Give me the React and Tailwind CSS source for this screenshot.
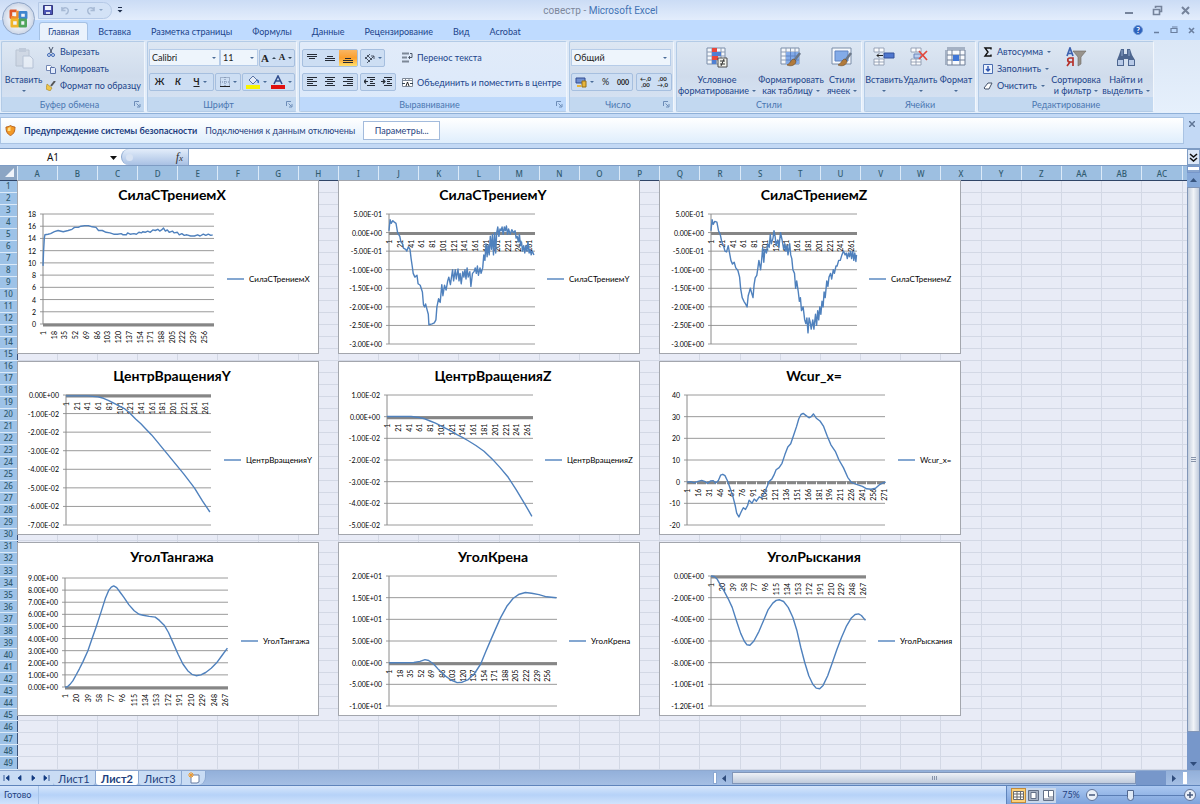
import { useState } from 'react';

const columns = [
  'A', 'B', 'C', 'D', 'E', 'F', 'G', 'H', 'I', 'J', 'K', 'L', 'M', 'N', 'O', 'P',
  'Q', 'R', 'S', 'T', 'U', 'V', 'W', 'X', 'Y', 'Z', 'AA', 'AB', 'AC',
];
const rows = Array.from({ length: 49 }, (_, i) => i + 1);

const sci = (v) => {
  if (v === 0) return '0.00E+00';
  const [m, e] = v.toExponential(2).split('e');
  return `${m}E${e[0]}${e.slice(1).padStart(2, '0')}`;
};

// plot: [left, right, top, bottom] inside the chart frame
// points: flat list of index, value pairs
const charts = [
  {
    title: 'СилаСТрениемX', plot: [25, 196, 33, 143], max: 18, min: 0, step: 2, every: 17, last: 256, legendX: 209,
    plain: true,
    points: [0, 9.5, 1, 12, 2, 14, 3, 14.6, 8, 14.7, 12, 14.8, 18, 15.1, 24, 15.3, 32, 15.1, 40, 15.3, 46, 15.5, 50, 15.8, 56, 15.8, 60, 16, 66, 16.1, 72, 16.1, 78, 15.9, 84, 15.8, 88, 15.3, 94, 15.3, 100, 15, 106, 14.9, 112, 14.7, 118, 14.7, 124, 14.8, 127, 14.6, 132, 14.6, 134, 14.9, 138, 14.7, 144, 14.8, 148, 14.7, 152, 15, 156, 14.9, 158, 15.1, 162, 15, 166, 15.2, 170, 15, 174, 15.4, 178, 15.3, 182, 15.5, 185, 15.2, 188, 15.4, 191, 15.7, 194, 15.2, 197, 15.4, 200, 15, 205, 15.2, 208, 14.9, 213, 15, 216, 14.6, 220, 14.8, 224, 14.5, 228, 14.6, 234, 14.4, 240, 14.4, 245, 14.6, 249, 14.4, 254, 14.7, 258, 14.5, 262, 14.7, 266, 14.5, 269, 14.6],
  },
  {
    title: 'СилаСТрениемY', plot: [50, 196, 33, 163], max: 0.5, min: -3, step: 0.5, every: 20, last: 261, legendX: 208,
    points: [0, 0.05, 2, 0.35, 4, 0.25, 7, 0.32, 10, 0.28, 13, 0.25, 16, 0, 20, -0.1, 22, -0.25, 25, -0.3, 27, -0.42, 31, -0.45, 33, -0.5, 36, -0.38, 39, -0.45, 41, -0.7, 43, -0.9, 45, -1.1, 48, -1.2, 52, -1.15, 54, -1.38, 58, -1.42, 62, -1.6, 64, -1.95, 66, -2, 68, -1.92, 71, -2.1, 73, -2.2, 74, -2.48, 80, -2.46, 84, -2.43, 87, -2.35, 89, -2, 92, -1.78, 95, -1.88, 98, -1.4, 100, -1.7, 103, -1.42, 106, -1.55, 109, -1.3, 111, -1.2, 114, -1.4, 118, -1, 120, -1.3, 123, -1, 125, -1.25, 128, -0.98, 130, -1.3, 132, -1.1, 134, -1.38, 137, -1.05, 139, -1.2, 141, -1, 143, -1.25, 145, -0.95, 147, -1.2, 150, -1.05, 152, -1.45, 155, -1.1, 158, -1.05, 160, -0.95, 162, -1.1, 164, -0.9, 166, -1.15, 169, -0.95, 171, -1.1, 174, -0.95, 176, -0.6, 178, -0.75, 180, -0.3, 182, -0.65, 184, -0.35, 186, -0.6, 188, -0.1, 190, -0.45, 192, -0.05, 194, -0.6, 196, 0, 198, -0.55, 200, 0, 202, 0.15, 204, -0.1, 206, 0.1, 208, 0.05, 210, 0.15, 212, -0.05, 214, 0.15, 216, 0.05, 218, 0.18, 220, -0.05, 222, 0.1, 225, -0.05, 228, 0.08, 231, 0, 234, 0.05, 236, -0.15, 238, -0.1, 240, -0.25, 242, -0.05, 244, -0.35, 246, -0.25, 248, -0.5, 250, -0.35, 252, -0.55, 254, -0.35, 256, -0.5, 258, -0.25, 260, -0.55, 262, -0.45, 264, -0.6, 266, -0.5, 269, -0.6],
  },
  {
    title: 'СилаСТрениемZ', plot: [51, 197, 33, 163], max: 0.5, min: -3, step: 0.5, every: 20, last: 261, legendX: 209,
    points: [0, 0.05, 2, 0.35, 4, 0.22, 7, 0.3, 11, 0.28, 14, 0.05, 17, -0.05, 20, -0.25, 23, -0.35, 26, -0.5, 29, -0.52, 32, -0.35, 35, -0.6, 37, -0.75, 40, -0.85, 43, -0.8, 46, -0.95, 50, -1.02, 53, -1.2, 55, -1.5, 58, -1.75, 61, -1.85, 64, -1.92, 67, -2, 69, -1.7, 71, -1.6, 73, -1.5, 76, -1.65, 78, -1.75, 80, -1.4, 82, -1.22, 85, -1.15, 87, -0.95, 89, -0.75, 92, -1, 94, -0.75, 96, -0.4, 98, -0.8, 100, -0.45, 103, -0.55, 105, -0.3, 108, -0.4, 110, -0.05, 112, -0.3, 115, -0.15, 117, 0.05, 119, -0.1, 121, -0.35, 124, -0.2, 126, -0.4, 129, 0, 132, -0.2, 135, -0.45, 137, -0.3, 139, -0.5, 141, -0.35, 143, -0.6, 146, -0.3, 148, -0.6, 150, -0.7, 152, -1, 155, -1.1, 157, -1.5, 159, -1.3, 162, -1.6, 164, -1.85, 166, -1.75, 168, -2.1, 171, -2, 174, -2.35, 176, -2.45, 178, -2.3, 180, -2.7, 182, -2.3, 184, -2.4, 186, -2.6, 189, -2.35, 191, -2.6, 194, -2.2, 196, -2.5, 198, -2.1, 200, -2.35, 202, -2, 204, -2.2, 206, -1.85, 208, -2, 210, -1.6, 212, -1.75, 215, -1.3, 217, -1.45, 219, -1.2, 222, -1.1, 224, -1.25, 227, -1, 229, -1.1, 232, -0.9, 234, -0.9, 237, -0.75, 240, -0.75, 243, -0.6, 246, -0.5, 249, -0.6, 251, -0.55, 253, -0.7, 255, -0.55, 257, -0.65, 259, -0.5, 261, -0.7, 263, -0.5, 265, -0.75, 267, -0.55, 269, -0.78, 270, -0.6],
  },
  {
    title: 'ЦентрВращенияY', plot: [48, 193, 33, 163], max: 0, min: -0.07, step: 0.01, every: 20, last: 261, legendX: 206,
    points: [0, -0.0005, 40, -0.0005, 60, -0.001, 70, -0.0018, 80, -0.003, 90, -0.0045, 100, -0.006, 110, -0.0075, 120, -0.01, 130, -0.013, 140, -0.0155, 150, -0.0185, 160, -0.0215, 170, -0.025, 180, -0.0285, 190, -0.032, 200, -0.0355, 220, -0.0425, 240, -0.05, 255, -0.057, 269, -0.063],
  },
  {
    title: 'ЦентрВращенияZ', plot: [48, 194, 33, 163], max: 0.01, min: -0.05, step: 0.01, every: 20, last: 261, legendX: 206,
    points: [0, 0.0001, 45, 0.0001, 60, -0.0004, 70, -0.001, 80, -0.002, 90, -0.003, 100, -0.0042, 110, -0.0055, 120, -0.0068, 130, -0.0083, 140, -0.0095, 150, -0.011, 165, -0.0133, 180, -0.016, 195, -0.0195, 210, -0.0235, 225, -0.028, 240, -0.0338, 255, -0.04, 269, -0.046],
  },
  {
    title: 'Wcur_x=', plot: [27, 225, 33, 163], max: 40, min: -20, step: 10, every: 15, last: 271, legendX: 238,
    plain: true, dashed: true,
    points: [0, -0.2, 5, 0, 10, -0.5, 14, 0, 20, 0.6, 25, 0, 28, -0.8, 32, 0.3, 36, 0.5, 39, -0.6, 43, 0.5, 46, 3, 49, 3.4, 52, 2.8, 56, 0, 60, -4, 63, -7, 66, -11, 68, -14.5, 71, -16.3, 74, -14, 77, -12, 80, -12.8, 83, -11, 85, -8.5, 89, -10, 92, -8, 95, -9, 99, -7, 102, -7.5, 106, -5, 110, -2, 112, 0, 116, 1.2, 119, 3, 122, 5.5, 126, 6.5, 130, 8.5, 134, 12.5, 138, 16, 142, 17.5, 146, 21.5, 150, 25.5, 153, 29, 156, 31, 159, 31.5, 163, 30.5, 167, 29.5, 170, 30, 173, 31.3, 177, 29.3, 182, 28, 187, 25.5, 192, 21, 197, 17, 203, 14, 208, 10, 214, 6.5, 220, 2, 225, -0.3, 232, -1.2, 240, -2.2, 246, -3.3, 252, -3.5, 258, -3, 263, -1.5, 268, -0.6, 272, -0.2],
  },
  {
    title: 'УголТангажа', plot: [47, 210, 35, 144], max: 9, min: 0, step: 1, every: 19, last: 267, legendX: 223,
    points: [0, 0, 4, 0.02, 8, 0.2, 13, 0.5, 18, 0.95, 24, 1.5, 30, 2.1, 38, 3, 45, 4, 52, 5, 60, 6.2, 67, 7.3, 73, 8, 77, 8.25, 81, 8.35, 86, 8.2, 92, 7.8, 98, 7.4, 106, 6.8, 115, 6.3, 123, 6, 130, 5.93, 140, 5.83, 150, 5.77, 157, 5.5, 165, 5.1, 172, 4.5, 180, 3.6, 188, 2.7, 196, 1.9, 204, 1.35, 211, 1.05, 218, 0.93, 226, 1, 234, 1.2, 243, 1.55, 252, 2, 261, 2.6, 270, 3.2],
  },
  {
    title: 'УголКрена', plot: [50, 218, 33, 163], max: 20, min: -10, step: 5, every: 17, last: 256, legendX: 230,
    points: [0, 0, 40, 0.05, 50, 0.3, 58, 0.7, 64, 0.5, 72, -0.3, 80, -1.6, 90, -3, 100, -4, 110, -4.6, 118, -4.5, 128, -3.9, 138, -2.5, 148, -0.3, 156, 2.5, 164, 5.2, 172, 7.8, 180, 10.4, 190, 13, 200, 14.8, 210, 15.8, 220, 16.2, 230, 16, 242, 15.7, 254, 15.2, 270, 15],
  },
  {
    title: 'УголРыскания', plot: [51, 206, 33, 163], max: 0, min: -12, step: 2, every: 19, last: 267, legendX: 218,
    points: [0, 0, 6, -0.05, 11, -0.3, 16, -0.8, 22, -1.3, 30, -2.1, 37, -2.9, 45, -4.2, 52, -5.3, 58, -6, 63, -6.35, 68, -6.4, 75, -6, 84, -5.1, 92, -4.1, 100, -3.1, 108, -2.5, 114, -2.25, 120, -2.2, 127, -2.35, 135, -2.9, 143, -3.8, 150, -5, 157, -6.6, 164, -8, 171, -9.2, 178, -10, 184, -10.35, 190, -10.4, 196, -10.1, 204, -9.2, 212, -8, 220, -6.8, 228, -5.7, 237, -4.6, 245, -3.9, 252, -3.55, 258, -3.5, 263, -3.65, 270, -4.1],
  },
];

const Chart = ({ chart }) => {
  const { title, plot, max, min, step, every, last, legendX, plain, dashed, points } = chart;
  const [x0, x1, y0, y1] = plot;
  const xAt = (i) => x0 + (i * (x1 - x0)) / 271;
  const yAt = (v) => y0 + ((max - v) * (y1 - y0)) / (max - min);
  const lines = Array.from({ length: Math.round((max - min) / step) + 1 }, (_, i) => {
    const v = max - i * step;
    return Math.abs(v) < step / 100 ? 0 : v;
  });
  const ticks = [];
  for (let i = 1; i <= last; i += every) ticks.push(i);
  const path = [];
  for (let i = 0; i < points.length; i += 2) {
    path.push(`${xAt(points[i]).toFixed(1)},${yAt(points[i + 1]).toFixed(1)}`);
  }

  return (
    <svg
      role="img"
      aria-label={title}
      viewBox="0 0 300 172"
      className="block h-[174px] w-[302px] border border-[#a3a6ad] bg-white font-['Lato','Noto_Sans',sans-serif]"
    >
      <text x="154" y="19" textAnchor="middle" className="text-[14px] font-bold">{title}</text>
      {lines.map((v) => (
        <g key={v}>
          <line x1={x0 - 3} x2={x1} y1={yAt(v)} y2={yAt(v)} stroke="#9a9a9a" />
          <text x={x0 - 7} y={yAt(v) + 3} textAnchor="end" className="text-[7px]">{plain ? v : sci(v)}</text>
        </g>
      ))}
      <line x1={x0} x2={x0} y1={y0} y2={y1} stroke="#8a8a8a" />
      <line
        x1={x0} x2={x1} y1={yAt(0) + 1} y2={yAt(0) + 1}
        stroke="#868686" strokeWidth="3" strokeDasharray={dashed ? '9 1' : undefined}
      />
      {ticks.map((t) => (
        <text
          key={t}
          transform={`translate(${xAt(t - 1) + 3} ${yAt(0) + 7}) rotate(-90)`}
          textAnchor="end"
          className="text-[7px]"
        >
          {t}
        </text>
      ))}
      <polyline points={path.join(' ')} fill="none" stroke="#4f81bd" strokeWidth="1.4" strokeLinejoin="round" />
      <line x1={legendX} x2={legendX + 17} y1="98" y2="98" stroke="#4f81bd" strokeWidth="1.4" />
      <text x={legendX + 22} y="101" className="text-[8px]">{title}</text>
    </svg>
  );
};

const Caret = () => (
  <svg viewBox="0 0 4 2" className="h-[2px] w-[4px] shrink-0"><path d="M0 0h4L2 2z" fill="#4a6c98" /></svg>
);

const Svg = ({ size = 'size-[14px]', box = 14, children }) => (
  <svg viewBox={`0 0 ${box} ${box}`} className={`${size} shrink-0`} fill="none">{children}</svg>
);

const Group = ({ title, width, launcher, hot, children }) => (
  <section className={`flex shrink-0 flex-col overflow-hidden rounded-[2px] border border-[#b3cbe6] border-r-[#f1f6fc] ${width} ${hot ? 'bg-linear-to-b from-[#e1ebf9] to-[#dbe9fb]' : 'bg-linear-to-b from-[#dde7f3] via-[#d0dcec] to-[#d7e4f5]'}`}>
    <div className="flex h-[56px] items-stretch">{children}</div>
    <div className={`flex h-[14px] items-center px-[3px] text-[9px] leading-none text-[#4a76b0] ${hot ? 'bg-[#bed9fb]' : 'bg-[#c2d8f0]'}`}>
      <span className="flex-1 text-center">{title}</span>
      {launcher && (
        <button aria-label={`${title}: параметры`}>
          <Svg size="size-[7px]" box={7}><path d="M.5 5V.5H5M2.500 2.500l3 3M6 3v3H3" stroke="#6d8db8" /></Svg>
        </button>
      )}
    </div>
  </section>
);

const Box = ({ children, label }) => (
  <div role="group" aria-label={label} className="flex h-[18px] items-stretch rounded-[2px] border border-[#a6bfdf] bg-[#cddef3]">{children}</div>
);

const Tool = ({ label, width = 'w-[18px]', active, children }) => (
  <button
    aria-label={label}
    className={`flex items-center justify-center gap-[3px] text-[9px] font-bold text-[#222] ${width} ${active ? 'bg-linear-to-b from-[#f9b661] via-[#fb9f2c] to-[#ffdf6b]' : ''}`}
  >
    {children}
  </button>
);

const Big = ({ icon, lines, width, disabled }) => (
  <button className={`flex flex-col items-center pt-[5px] leading-[11px] whitespace-nowrap ${width}`}>
    <span className={`mb-[5px] block h-[22px] ${disabled ? 'opacity-40' : ''}`}>{icon}</span>
    <span>{lines[0]}</span>
    <span className="flex h-[11px] items-center gap-[3px]">{lines[1]}<Caret /></span>
  </button>
);

const Small = ({ icon, text, caret }) => (
  <button className="flex h-[17px] items-center gap-[4px] whitespace-nowrap">
    {icon}
    <span>{text}</span>
    {caret && <Caret />}
  </button>
);

const Drop = ({ label, value, width }) => (
  <span className={`relative flex h-[17px] items-center ${width}`}>
    <select aria-label={label} className="h-full w-full appearance-none border border-[#b6cce8] bg-[#eef5fc] pl-[2px] text-[9px] leading-none text-[#222]">
      <option>{value}</option>
    </select>
    <span className="pointer-events-none absolute right-[4px]"><Caret /></span>
  </span>
);

const AlignIcon = ({ kind }) => {
  const paths = {
    top: 'M1 2.500h10M1 4.500h10M3 6.500h6',
    middle: 'M3 4.500h6M1 6.500h10M1 8.500h10',
    bottom: 'M3 6.500h6M1 8.500h10M1 10.500h10',
    left: 'M1 1.500h10M1 3.500h6M1 5.500h10M1 7.500h6M1 9.500h10',
    center: 'M1 1.500h10M3 3.500h6M1 5.500h10M3 7.500h6M1 9.500h10',
    right: 'M1 1.500h10M5 3.500h6M1 5.500h10M5 7.500h6M1 9.500h10',
    outdent: 'M3 1.500h8M6 3.500h5M6 5.500h3M6 7.500h5M3 9.500h8M4 5.500H0M2 3.500l-2 2 2 2',
    indent: 'M3 1.500h8M6 3.500h5M6 5.500h3M6 7.500h5M3 9.500h8M0 5.500h4M2 3.500l2 2-2 2',
  };
  return <Svg size="size-[12px]" box={12}><path d={paths[kind]} stroke="#252b35" strokeWidth="1.200" /></Svg>;
};

const GridArt = ({ children }) => (
  <Svg size="size-[22px]" box={22}>
    <path d="M1 1h18v16H1z" fill="#f5f8fc" stroke="#7b8da8" />
    <path d="M1 5h18M1 9h18M1 13h18M6 1v16M10.500 1v16M15 1v16" stroke="#8c9cb4" />
    {children}
  </Svg>
);

const Brush = () => (
  <>
    <path d="M20 6l-6 8" stroke="#6a7687" strokeWidth="2.500" />
    <path d="M14 12c-3 0-3 4-7 6 4 2 9 0 9-4z" fill="#b07a3c" stroke="#6d4b25" strokeWidth=".6" />
  </>
);

const CellsArt = ({ children }) => (
  <Svg size="size-[22px]" box={22}>
    <path d="M1 1h10v4H1zM6 1v4M1 12h10v6H1zM6 12v6M1 15h10" fill="#fbfcfe" stroke="#8592a8" strokeWidth=".8" />
    {children}
  </Svg>
);

const TitleBar = () => (
  <header className="relative flex h-[20px] shrink-0 items-center bg-linear-to-b from-[#cbdcf5] to-[#e3edfc] pl-[38px]">
    <button aria-label="Кнопка Office" className="absolute top-[2px] left-[2px] z-10 size-[33px] rounded-full border border-[#8fa5c6] bg-radial from-white via-[#e3e9f3] to-[#aebdd6] p-[5px]">
      <svg viewBox="0 0 22 22" fill="none" strokeWidth="2.800" strokeLinejoin="round">
        <path d="M9 3H3v7h3" stroke="#e0562a" />
        <path d="M3 10h7V3" stroke="#ef8e2e" />
        <path d="M12.500 4.500h6.500v6h-6.500z" stroke="#3f86cf" />
        <path d="M4 12.500h6.500V19H4z" stroke="#f0b52b" />
        <path d="M12.500 12.500h6V19h-6z" stroke="#4fa55a" />
      </svg>
    </button>
    <div className="flex h-[17px] w-[74px] items-center gap-[6px] rounded-r-full border border-[#b5c9e6] bg-[#d3e2f6] pl-[4px]">
      <button aria-label="Сохранить">
        <Svg size="size-[10px]" box={10}><path d="M.5.5h9v9h-9z" fill="#4c55b5" stroke="#34397f" /><path d="M2 1h6v4H2z" fill="#eef1fb" /><path d="M3 7h4v2H3z" fill="#d9def0" /></Svg>
      </button>
      <button aria-label="Отменить" className="ml-[2px] flex items-center gap-[4px] opacity-50">
        <Svg size="size-[9px]" box={10}><path d="M1 1v4h4M1 5c2-5 8-3 7 1-.5 2-2 3-3 3" stroke="#7d93b5" strokeWidth="1.6" /></Svg>
        <Caret />
      </button>
      <button aria-label="Вернуть" className="ml-[2px] flex items-center gap-[4px] opacity-50">
        <Svg size="size-[9px]" box={10}><path d="M9 1v4H5M9 5C7 0 1 2 2 6c.5 2 2 3 3 3" stroke="#7d93b5" strokeWidth="1.6" /></Svg>
        <Caret />
      </button>
    </div>
    <button aria-label="Настройка панели быстрого доступа" className="ml-[5px]">
      <Svg size="size-[6px]" box={6}><path d="M1 .5h4" stroke="#1f2f4d" /><path d="M.5 3h5L3 5.500z" fill="#1f2f4d" /></Svg>
    </button>
    <h1 className="flex-1 pr-[46px] text-center font-['Roboto',sans-serif] text-[10px] text-[#4373b4]"><span className="text-[#7d879b]">совестр - </span>Microsoft Excel</h1>
    <div className="flex w-[76px] items-center justify-between pr-[10px] text-[#75839b]">
      <button aria-label="Свернуть"><Svg size="size-[9px]" box={9}><path d="M1 7h8" stroke="currentColor" strokeWidth="2" /></Svg></button>
      <button aria-label="Восстановить"><Svg size="size-[11px]" box={11}><path d="M3.500 3V1.500h6v5H8M1.500 4.500h6v5h-6z" stroke="currentColor" strokeWidth="1.6" /></Svg></button>
      <button aria-label="Закрыть"><Svg size="size-[9px]" box={9}><path d="M1 1l7 7M8 1L1 8" stroke="currentColor" strokeWidth="2" /></Svg></button>
    </div>
  </header>
);

const ribbonTabs = ['Главная', 'Вставка', 'Разметка страницы', 'Формулы', 'Данные', 'Рецензирование', 'Вид', 'Acrobat'];

const TabStrip = () => (
  <nav className="flex h-[20px] shrink-0 items-end bg-[#bfdbff] pr-[5px] pl-[39px] text-[9px] leading-none text-[#20438a]">
    {ribbonTabs.map((tab, i) => (
      <button
        key={tab}
        className={`flex h-[18px] items-center px-[8px] whitespace-nowrap ${i === 0 ? 'mr-[2px] rounded-t-[3px] border border-b-0 border-[#a5c1e4] bg-[#eaf2fc]' : 'mr-[4px]'}`}
      >
        {tab}
      </button>
    ))}
    <div className="ml-auto flex h-[20px] w-[62px] items-center justify-between text-[#6b7f9f]">
      <button aria-label="Справка" className="flex size-[10px] items-center justify-center rounded-full border border-[#6d97d4] bg-[#2d62bd] text-[8px] font-bold text-white">?</button>
      <button aria-label="Свернуть окно"><Svg size="size-[7px]" box={7}><path d="M1 5.500h5" stroke="currentColor" strokeWidth="1.5" /></Svg></button>
      <button aria-label="Восстановить окно"><Svg size="size-[8px]" box={8}><path d="M1 2.500h6v4H1zM2 1h5.500" stroke="currentColor" strokeWidth="1.2" /></Svg></button>
      <button aria-label="Закрыть окно"><Svg size="size-[7px]" box={7}><path d="M1 1l5 5M6 1L1 6" stroke="currentColor" strokeWidth="1.6" /></Svg></button>
    </div>
  </nav>
);

const Ribbon = () => (
  <div className="flex h-[74px] shrink-0 gap-[2px] overflow-hidden border-b border-[#8fb0d8] bg-linear-to-b from-[#dbe7f6] to-[#e6f0fc] p-px text-[9px] text-[#20438a]">
    <Group title="Буфер обмена" width="w-[144px]" launcher>
      <Big
        width="w-[43px]" lines={['Вставить', '']} disabled
        icon={<Svg size="size-[22px]" box={22}><path d="M3 3h13v16H3z" fill="#c4cad4" stroke="#8c96a8" /><path d="M6 1h7v4H6z" fill="#9aa5b8" /><path d="M10 9h7l3 3v9H10z" fill="#fff" stroke="#8896b0" /></Svg>}
      />
      <div className="flex flex-col pt-px pl-px">
        <Small text="Вырезать" icon={<Svg size="size-[10px]" box={10}><path d="M3 0l3 6M7 0L4 6" stroke="#44526a" /><circle cx="3" cy="8" r="1.500" stroke="#3e66b4" /><circle cx="7" cy="8" r="1.500" stroke="#3e66b4" /></Svg>} />
        <Small text="Копировать" icon={<Svg size="size-[10px]" box={10}><path d="M.5 1.500h4l1 1v4h-5z" fill="#fff" stroke="#7488b4" /><path d="M4.500 3.500h4l1 1v5h-5z" fill="#e1eafa" stroke="#5a72a8" /></Svg>} />
        <Small text="Формат по образцу" icon={<Svg size="size-[10px]" box={10}><path d="M9 0L5 5" stroke="#555" strokeWidth="2" /><path d="M1 3l5 4-2 3-4-2z" fill="#f0c64a" stroke="#a58123" strokeWidth=".6" /></Svg>} />
      </div>
    </Group>

    <Group title="Шрифт" width="w-[150px]" launcher>
      <div className="flex w-full flex-col justify-between px-px pt-[7px] pb-[6px]">
        <div className="flex">
          <Drop label="Шрифт" value="Calibri" width="w-[71px]" />
          <Drop label="Размер шрифта" value="11" width="w-[38px]" />
          <div className="ml-auto">
            <Box label="Размер">
              <Tool label="Увеличить размер" width="w-[17px]"><span className="font-['Liberation_Serif',serif] text-[11px]">A</span><Svg size="size-[4px]" box={4}><path d="M0 3l2-2 2 2" fill="#345" /></Svg></Tool>
              <Tool label="Уменьшить размер" width="w-[17px]"><span className="font-['Liberation_Serif',serif] text-[9px]">A</span><Svg size="size-[4px]" box={4}><path d="M0 1l2 2 2-2" fill="#345" /></Svg></Tool>
            </Box>
          </div>
        </div>
        <div className="flex justify-between">
          <Box label="Начертание">
            <Tool label="Полужирный" width="w-[19px]">Ж</Tool>
            <Tool label="Курсив" width="w-[18px]"><i>К</i></Tool>
            <Tool label="Подчеркнутый" width="w-[26px]"><u>Ч</u><Caret /></Tool>
          </Box>
          <Box label="Границы">
            <Tool label="Границы" width="w-[24px]"><Svg size="size-[10px]" box={10}><path d="M.5.5h9v9h-9zM5 0v10M0 5h10" stroke="#7386a5" strokeDasharray="1 1" /><path d="M0 9.500h10" stroke="#222" /></Svg><Caret /></Tool>
          </Box>
          <Box label="Цвет">
            <Tool label="Цвет заливки" width="w-[26px]"><Svg size="size-[14px]"><path d="M3 5l4-4 4 4-4 4z" fill="#e4ecf8" stroke="#5b73a3" /><path d="M11 5c2 1 1 3 1 3" stroke="#3f6fc0" strokeWidth="1.500" /><path d="M0 10h14v4H0z" fill="#f8f400" /></Svg><Caret /></Tool>
            <Tool label="Цвет текста" width="w-[25px]"><Svg size="size-[14px]"><path d="M3 9l4-8 4 8M4.500 6h5" stroke="#33508f" strokeWidth="1.600" /><path d="M0 10h14v4H0z" fill="#e01010" /></Svg><Caret /></Tool>
          </Box>
        </div>
      </div>
    </Group>

    <Group title="Выравнивание" width="w-[268px]" launcher hot>
      <div className="flex w-[95px] flex-col justify-between pt-[7px] pb-[6px] pl-[2px]">
        <div className="flex gap-[2px]">
          <Box label="По вертикали">
            <Tool label="По верхнему краю"><AlignIcon kind="top" /></Tool>
            <Tool label="Посередине"><AlignIcon kind="middle" /></Tool>
            <Tool label="По нижнему краю" active><AlignIcon kind="bottom" /></Tool>
          </Box>
          <Box label="Ориентация">
            <Tool label="Ориентация" width="w-[23px]"><Svg size="size-[11px]" box={11}><path d="M1 4l5 5M3 2l5 5M6 1L1 6M3 10l7-7M10 6V3H7" stroke="#4c5768" /></Svg><Caret /></Tool>
          </Box>
        </div>
        <div className="flex gap-[2px]">
          <Box label="По горизонтали">
            <Tool label="По левому краю"><AlignIcon kind="left" /></Tool>
            <Tool label="По центру"><AlignIcon kind="center" /></Tool>
            <Tool label="По правому краю"><AlignIcon kind="right" /></Tool>
          </Box>
          <Box label="Отступ">
            <Tool label="Уменьшить отступ" width="w-[17px]"><AlignIcon kind="outdent" /></Tool>
            <Tool label="Увеличить отступ" width="w-[17px]"><AlignIcon kind="indent" /></Tool>
          </Box>
        </div>
      </div>
      <div className="my-[8px] ml-[2px] w-px bg-[#b3c8e4]" />
      <div className="flex flex-col justify-between pt-[7px] pb-[6px] pl-[5px]">
        <Small text="Перенос текста" icon={<Svg size="size-[11px]" box={11}><path d="M0 1.500h7M0 5.500h5M0 9.500h7" stroke="#7d8897" strokeWidth="2" /><path d="M8 1.500h2v4H7M8 4L6.500 5.500 8 7" stroke="#4c5768" /></Svg>} />
        <Small caret text="Объединить и поместить в центре" icon={<Svg size="size-[11px]" box={11}><path d="M.5 1.500h10v8H.5zM.5 3.500h10M3.500 1.500v2M7 1.500v2" fill="#fff" stroke="#7d8897" /><path d="M0 6.500h3M11 6.500H8" stroke="#345" /><path d="M4 9l1.500-4L7 9" stroke="#222" /></Svg>} />
      </div>
    </Group>

    <Group title="Число" width="w-[105px]" launcher>
      <div className="flex w-full flex-col justify-between px-px pt-[7px] pb-[6px]">
        <Drop label="Числовой формат" value="Общий" width="w-[100px]" />
        <div className="flex justify-between">
          <Box label="Формат">
            <Tool label="Денежный формат" width="w-[25px]"><Svg size="size-[12px]" box={12}><path d="M1 2h9v5H1z" fill="#6f8fd0" stroke="#324d91" /><path d="M7 5h4v6H7z" fill="#e8b53a" stroke="#96701a" /><path d="M2 9h4v2H2z" fill="#e8b53a" /></Svg><Caret /></Tool>
            <Tool label="Процентный формат" width="w-[17px]"><span className="font-normal">%</span></Tool>
            <Tool label="Формат с разделителями" width="w-[18px]"><span className="text-[7px]">000</span></Tool>
          </Box>
          <Box label="Разрядность">
            <Tool label="Увеличить разрядность" width="w-[17px]"><span className="text-[6px] leading-[6px]">←,0<br />,00</span></Tool>
            <Tool label="Уменьшить разрядность" width="w-[17px]"><span className="text-[6px] leading-[6px]">,00<br />→,0</span></Tool>
          </Box>
        </div>
      </div>
    </Group>

    <Group title="Стили" width="w-[186px]">
      <Big width="w-[80px]" lines={['Условное', 'форматирование']} icon={<GridArt><path d="M6 1h5v4H6zM6 9h6v4H6z" fill="#e8483c" /><path d="M6 5h9v4H6zM6 13h4v4H6z" fill="#4f7fd3" /><path d="M12 11h9v9h-9z" fill="#f2f2ea" stroke="#4a4a4a" /><path d="M14 14h5M14 17h5M18 12l-3 7" stroke="#333" /></GridArt>} />
      <Big width="w-[68px]" lines={['Форматировать', 'как таблицу']} icon={<GridArt><path d="M6 5h13v12H6z" fill="#83abe8" /><path d="M6 9h13M6 13h13M10.500 5v12M15 5v12" stroke="#5f83c2" /><Brush /></GridArt>} />
      <Big width="w-[34px]" lines={['Стили', 'ячеек']} icon={<Svg size="size-[22px]" box={22}><path d="M1 1h19v16H1z" fill="#f5f8fc" stroke="#7b8da8" /><path d="M4 4h13v10H4z" fill="#83abe8" stroke="#5f83c2" /><Brush /></Svg>} />
    </Group>

    <Group title="Ячейки" width="w-[112px]">
      <Big width="w-[38px]" lines={['Вставить', '']} icon={<CellsArt><path d="M11 6h10v5H11z" fill="#4f77cf" stroke="#35539a" /><path d="M10 8.500H4M6 6.500l-2 2 2 2" stroke="#222" /></CellsArt>} />
      <Big width="w-[35px]" lines={['Удалить', '']} icon={<CellsArt><path d="M4 7h7v4H4z" fill="#b9cdf0" stroke="#6d86b8" /><path d="M9 4l8 9M17 4l-8 8" stroke="#e2483c" strokeWidth="1.700" /></CellsArt>} />
      <Big width="w-[36px]" lines={['Формат', '']} icon={<Svg size="size-[22px]" box={22}><path d="M2 3h18v15H2z" fill="#f8fafd" stroke="#6e7e97" /><path d="M2 8h18M2 13h18M7 3v15M15 3v15M2 1h18M0 3v15" stroke="#6e7e97" /><path d="M8 8h6v6H8z" fill="#3f76d6" /></Svg>} />
    </Group>

    <Group title="Редактирование" width="w-[176px]">
      <div className="flex w-[70px] flex-col pt-px pl-[4px]">
        <Small caret text="Автосумма" icon={<Svg size="size-[10px]" box={10}><path d="M8 2.500V1H2l3 4-3 4h6V7.500" stroke="#111" strokeWidth="1.400" /></Svg>} />
        <Small caret text="Заполнить" icon={<Svg size="size-[10px]" box={10}><path d="M.5.5h9v9h-9z" fill="#eaf1fc" stroke="#4a6db0" /><path d="M5 2v5M3 5l2 2 2-2" stroke="#2c55b0" strokeWidth="1.400" /></Svg>} />
        <Small caret text="Очистить" icon={<Svg size="size-[10px]" box={10}><path d="M1 7l4-5h4L6 8H2z" fill="#fff" stroke="#44526a" /></Svg>} />
      </div>
      <Big width="w-[54px]" lines={['Сортировка', 'и фильтр']} icon={<Svg size="size-[22px]" box={22}><path d="M2 9l3-8 3 8M3 6.500h4" stroke="#3c62b0" strokeWidth="1.700" /><path d="M8 19v-8H5c-3 0-3 4 0 4h3M5 15l-3 4" stroke="#b5322c" strokeWidth="1.700" /><path d="M8 4h13l-5 6v7l-3 2v-9z" fill="#98938c" stroke="#6b665f" strokeWidth=".6" /></Svg>} />
      <Big width="w-[46px]" lines={['Найти и', 'выделить']} icon={<Svg size="size-[22px]" box={22}><path d="M6 2h3v5h3V2h3l2 6 3 5v6h-7v-7H9v7H2v-6l2-5z" fill="#4d668f" /><path d="M3 13h5v5H3zM14 13h5v5h-5z" fill="#b9cbe8" /><path d="M7 3v6M14 3v6" stroke="#93a9cc" /></Svg>} />
    </Group>
    <div className="flex-1" />
  </div>
);

const SecurityBar = ({ onClose }) => (
  <div className="flex h-[34px] shrink-0 items-start bg-[#c3d9f5] pt-[3px]">
    <div className="flex h-[27px] flex-1 items-center border border-[#a9c3e3] bg-linear-to-b from-white to-[#dfeefc] pl-[4px] text-[9px] text-[#1f3f80]">
      <Svg size="size-[11px]" box={11}><path d="M5.500.500C7 1.500 9 2 10 2c0 4-1 7-4.500 8.500C2 9 1 6 1 2c1 0 3-.5 4.500-1.500z" fill="#f39a26" stroke="#b8641c" /><path d="M3 3l2.500-1v4H2.600z" fill="#fde28a" /></Svg>
      <strong className="ml-[8px]">Предупреждение системы безопасности</strong>
      <span className="ml-[8px]">Подключения к данным отключены</span>
      <button className="ml-[8px] h-[19px] w-[77px] border border-[#a3bbdc] bg-white">Параметры...</button>
    </div>
    <button aria-label="Закрыть предупреждение" onClick={onClose} className="flex w-[16px] justify-center pt-[4px]">
      <Svg size="size-[6px]" box={6}><path d="M0 0l6 6M6 0L0 6" stroke="#5f7595" strokeWidth="1.500" /></Svg>
    </button>
  </div>
);

const FormulaBar = () => (
  <div className="flex h-[18px] shrink-0 border-y border-[#7e9cc4] bg-white">
    <label className="relative flex w-[121px] items-center">
      <input aria-label="Имя" defaultValue="A1" className="mr-[4px] w-[106px] bg-transparent text-center font-['Noto_Sans',sans-serif] text-[10px] text-[#111] outline-none" />
      <Svg size="size-[7px]" box={7}><path d="M0 2h7L3.500 6z" fill="#111" /></Svg>
    </label>
    <div className="flex w-[67px] items-center justify-between rounded-l-full border-l border-[#8ca9d0] bg-linear-to-b from-[#e3edfa] to-[#a9c1e4] pr-[5px] pl-[4px]">
      <span className="size-[7px] rounded-full bg-[#d8e3f3]" />
      <button aria-label="Вставить функцию" className="font-['Liberation_Serif',serif] text-[12px] leading-none text-[#333] italic">f<span className="text-[9px]">x</span></button>
    </div>
    <input aria-label="Строка формул" className="min-w-0 flex-1 border-l border-[#8ca9d0] px-[4px] text-[10px] outline-none" />
    <button aria-label="Развернуть строку формул" className="flex w-[13px] items-center justify-center border border-[#7e9cc4] bg-[#dbe7f7]">
      <Svg size="size-[9px]" box={9}><path d="M1 1l3.500 3L8 1M1 5l3.500 3L8 5" stroke="#111" strokeWidth="1.600" /></Svg>
    </button>
  </div>
);

const Sheet = () => (
  <div className="flex min-h-0 flex-1 bg-[#e8ebf6]">
    <div className="relative min-w-0 flex-1 overflow-hidden">
      <table className="h-full w-full table-fixed border-collapse font-['Noto_Sans',sans-serif]">
        <colgroup>
          <col className="w-[17px]" />
          {columns.map((c) => <col key={c} />)}
          <col className="w-[5px]" />
        </colgroup>
        <thead>
          <tr className="h-[14px] bg-[#9dbfe1] text-[8px] leading-none text-[#315b70]">
            <th aria-label="Выделить все" className="border-b border-[#2f4467] bg-[#8ba5c4] p-0">
              <svg viewBox="0 0 17 13" className="block h-[13px] w-[17px]"><path d="M14 2v9H5z" fill="#eef3fa" /></svg>
            </th>
            {columns.map((c) => <th key={c} scope="col" className="border-x border-b border-x-[#dceaf8] border-b-[#2f4467] p-0 pt-[2px] font-medium">{c}</th>)}
            <th className="border-b border-[#2f4467] p-0" />
          </tr>
        </thead>
        <tbody>
          {rows.map((r) => (
            <tr key={r}>
              <th scope="row" className="border-y border-r border-y-[#dceaf8] border-r-[#3c5379] bg-[#9dc2e7] p-0 text-[8px] leading-[8px] font-medium text-[#315b70]">{r}</th>
              {columns.map((c) => <td key={c} className="border border-[#d3d8e5] p-0" />)}
              <td className="border-y border-[#d3d8e5] p-0" />
            </tr>
          ))}
        </tbody>
      </table>
      {/* charts float above the cells */}
      <div className="absolute top-[14px] left-[17px] grid grid-cols-[302px_302px_302px] gap-x-[19px] gap-y-[7px]">
        {charts.map((chart) => <Chart key={chart.title} chart={chart} />)}
      </div>
    </div>
    <div className="flex w-[13px] flex-col bg-[#7797ca]">
      <div className="m-px h-[5px] border-b-2 border-[#8aa6cf] bg-white" />
      <button aria-label="Вверх" className="flex h-[14px] items-center justify-center bg-[#86a9d9]"><Svg size="size-[7px]" box={7}><path d="M0 5h7L3.500 1z" fill="#38557f" /></Svg></button>
      <div className="flex flex-1 items-center justify-center border border-[#8196b8] bg-linear-to-r from-[#c4cedd] via-[#f1f4f8] to-[#c0cbdc]">
        <Svg size="size-[7px]" box={7}><path d="M1 1.500h5M1 3.500h5M1 5.500h5" stroke="#8794aa" /></Svg>
      </div>
      <div className="h-[25px]" />
      <button aria-label="Вниз" className="flex h-[13px] items-center justify-center"><Svg size="size-[7px]" box={7}><path d="M0 2h7L3.500 6z" fill="#2f4c7c" /></Svg></button>
    </div>
  </div>
);

const sheetTabs = ['Лист1', 'Лист2', 'Лист3'];

const SheetBar = () => {
  const [active, setActive] = useState('Лист2');
  const arrows = [
    ['В начало', 'M1 1v6M6 1.500L3 4l3 2.500z'],
    ['Назад', 'M5 1.500L2 4l3 2.500z'],
    ['Вперед', 'M3 1.500L6 4 3 6.500z'],
    ['В конец', 'M7 1v6M2 1.500L5 4 2 6.500z'],
  ];
  return (
    <div className="flex h-[15px] shrink-0 items-stretch border-t border-[#8fa9d0] bg-linear-to-b from-[#93b0da] to-[#a5bfe4]">
      <div className="flex w-[53px] items-center justify-around bg-[#c9dcf4]">
        {arrows.map(([label, d]) => (
          <button key={label} aria-label={label}><Svg size="size-[8px]" box={8}><path d={d} fill="#123a80" stroke="#123a80" strokeWidth=".8" /></Svg></button>
        ))}
      </div>
      {sheetTabs.map((tab) => (
        <button
          key={tab}
          onClick={() => setActive(tab)}
          className={`w-[43px] rounded-b-[3px] border-r border-[#8ba8d2] text-[11px] leading-none text-[#1e3f7e] ${active === tab ? 'bg-white font-bold' : 'bg-[#c9dcf4]'}`}
        >
          {tab}
        </button>
      ))}
      <button aria-label="Вставить лист" className="flex w-[24px] items-center justify-center rounded-br-[8px] border-r border-[#8ba8d2] bg-[#c9dcf4]">
        <Svg size="size-[12px]" box={12}><path d="M3 3h8v7l-2 1H3z" fill="#fff" stroke="#6b7fa3" /><path d="M3 0v6M0 3h6M1 1l4 4M5 1L1 5" stroke="#f09a2c" /></Svg>
      </button>
      <div className="flex-1" />
      <div className="flex w-[487px] items-stretch">
        <div className="my-px w-[4px] border border-[#8ba8d2] bg-white" />
        <button aria-label="Влево" className="flex w-[15px] items-center justify-center"><Svg size="size-[7px]" box={7}><path d="M5 0v7L1 3.500z" fill="#2f4c7c" /></Svg></button>
        <div className="my-px flex w-[404px] items-center justify-center border border-[#8196b8] bg-linear-to-b from-[#eef1f6] to-[#c0cbdc]">
          <Svg size="size-[6px]" box={6}><path d="M1.500 1v4M3.500 1v4M5.500 1v4" stroke="#8794aa" /></Svg>
        </div>
        <div className="w-[30px] bg-[#7797ca]" />
        <button aria-label="Вправо" className="flex w-[15px] items-center justify-center"><Svg size="size-[7px]" box={7}><path d="M2 0v7l4-3.500z" fill="#2f4c7c" /></Svg></button>
        <div className="my-px ml-[2px] w-[4px] bg-white" />
      </div>
    </div>
  );
};

const Round = ({ label, d }) => (
  <button aria-label={label} className="flex size-[12px] items-center justify-center rounded-full border border-[#5f7298] bg-[#e9eff8]">
    <Svg size="size-[8px]" box={8}><path d={d} stroke="#46597c" strokeWidth="1.500" /></Svg>
  </button>
);

const StatusBar = () => (
  <footer className="flex h-[19px] shrink-0 items-stretch border-t border-[#5f84bb] bg-linear-to-b from-[#d6e6fb] via-[#b6d2f8] to-[#d0e3fc] text-[9px] text-[#1e3f7e]">
    <span className="flex w-[39px] items-center border-r border-[#a6c3e8] pl-[4px]">Готово</span>
    <div className="flex-1" />
    <div className="flex w-[194px] items-center border-l border-[#5f84bb] bg-linear-to-b from-[#abc8f1] to-[#7ea3dc] pl-[4px]">
      <button aria-label="Обычный" className="flex size-[15px] items-center justify-center border border-[#c08a3c] bg-[#fbd078]"><Svg size="size-[11px]" box={11}><path d="M.5 1.500h10v8H.5zM.5 4h10M.5 7h10M4 1.500v8M7.500 1.500v8" fill="#fff" stroke="#6b6b6b" /></Svg></button>
      <button aria-label="Разметка страницы" className="flex size-[15px] items-center justify-center bg-[#c9d7ea]"><Svg size="size-[11px]" box={11}><path d="M.5.500h10v10H.5z" fill="#a7b2c4" stroke="#626f86" /><path d="M3 2.500h5v6H3z" fill="#fff" stroke="#626f86" /></Svg></button>
      <button aria-label="Страничный" className="flex size-[15px] items-center justify-center bg-[#c9d7ea]"><Svg size="size-[11px]" box={11}><path d="M.5.500h10v10H.5z" fill="#fff" stroke="#626f86" /><path d="M5.500 1v6h5M.5 9h10" stroke="#626f86" /></Svg></button>
      <span className="w-[30px] text-center">75%</span>
      <Round label="Уменьшить масштаб" d="M1 4h6" />
      <input
        type="range"
        aria-label="Масштаб"
        min="10"
        max="190"
        defaultValue="75"
        className="h-[12px] min-w-0 flex-1 appearance-none bg-[linear-gradient(#5a7db5,#5a7db5)] bg-[length:100%_1px] bg-center bg-no-repeat [&::-webkit-slider-thumb]:h-[11px] [&::-webkit-slider-thumb]:w-[7px] [&::-webkit-slider-thumb]:appearance-none [&::-webkit-slider-thumb]:rounded-b-full [&::-webkit-slider-thumb]:border [&::-webkit-slider-thumb]:border-[#52678f] [&::-webkit-slider-thumb]:bg-[#dfe9f6]"
      />
      <Round label="Увеличить масштаб" d="M1 4h6M4 1v6" />
      <span className="w-[4px]" />
    </div>
  </footer>
);

export default function App() {
  const [warning, setWarning] = useState(true);
  return (
    <div className="flex h-screen flex-col overflow-hidden bg-[#bfdbff] font-['Lato','Noto_Sans',sans-serif]">
      <TitleBar />
      <TabStrip />
      <Ribbon />
      {warning && <SecurityBar onClose={() => setWarning(false)} />}
      <FormulaBar />
      <Sheet />
      <SheetBar />
      <StatusBar />
    </div>
  );
}
